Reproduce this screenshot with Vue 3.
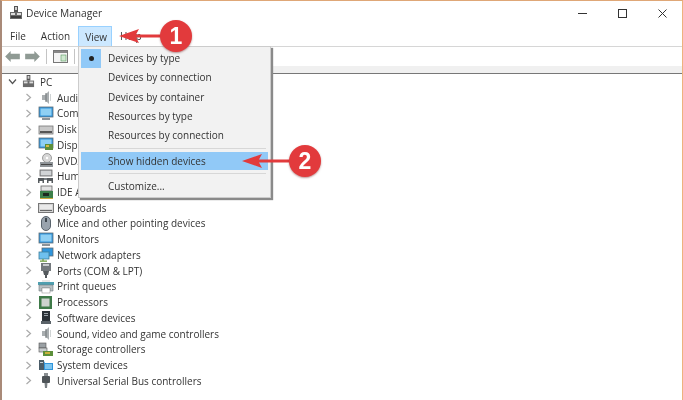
<script setup>
const menuBar = ['File', 'Action', 'View', 'Help']

const devices = [
  { label: 'Audio inputs and outputs', icon: 'speaker' },
  { label: 'Computer', icon: 'monitor' },
  { label: 'Disk drives', icon: 'disk' },
  { label: 'Display adapters', icon: 'display' },
  { label: 'DVD/CD-ROM drives', icon: 'dvd' },
  { label: 'Human Interface Devices', icon: 'hid' },
  { label: 'IDE ATA/ATAPI controllers', icon: 'ide' },
  { label: 'Keyboards', icon: 'keyboard' },
  { label: 'Mice and other pointing devices', icon: 'mouse' },
  { label: 'Monitors', icon: 'monitor' },
  { label: 'Network adapters', icon: 'network' },
  { label: 'Ports (COM & LPT)', icon: 'port' },
  { label: 'Print queues', icon: 'printer' },
  { label: 'Processors', icon: 'cpu' },
  { label: 'Software devices', icon: 'software' },
  { label: 'Sound, video and game controllers', icon: 'speaker' },
  { label: 'Storage controllers', icon: 'storage' },
  { label: 'System devices', icon: 'system' },
  { label: 'Universal Serial Bus controllers', icon: 'usb' },
]

const viewItems = [
  { label: 'Devices by type', checked: true },
  { label: 'Devices by connection' },
  { label: 'Devices by container' },
  { label: 'Resources by type' },
  { label: 'Resources by connection' },
]
</script>

<template>
  <div class="window">
    <header class="titlebar">
      <svg class="titlebar__icon" width="14" height="14" viewBox="0 0 14 14">
        <rect x="5" y="0" width="4" height="6" fill="#555" />
        <rect x="6" y="1" width="2" height="3" fill="#cfcfcf" />
        <rect x="1" y="6" width="12" height="7" fill="#6a6a6a" />
        <rect x="2" y="7" width="4" height="2" fill="#ddd" />
        <rect x="8" y="7" width="4" height="2" fill="#ddd" />
        <rect x="2" y="10" width="10" height="2" fill="#3d3d3d" />
      </svg>
      <span class="titlebar__text">Device Manager</span>
      <div class="titlebar__controls">
        <svg width="9" height="9" viewBox="0 0 9 9"><path d="M0 4.5h9" stroke="#333" /></svg>
        <svg width="9" height="9" viewBox="0 0 9 9"><rect x=".5" y=".5" width="8" height="8" fill="none" stroke="#333" /></svg>
        <svg width="9" height="9" viewBox="0 0 9 9"><path d="M.5.5l8 8M8.5.5l-8 8" stroke="#333" /></svg>
      </div>
    </header>

    <nav class="menubar">
      <span
        v-for="item in menuBar"
        :key="item"
        class="menubar__item"
        :class="{ 'menubar__item--open': item === 'View' }"
      >{{ item }}</span>
    </nav>

    <div class="toolbar">
      <svg class="toolbar__arrow" width="15" height="11" viewBox="0 0 16 12"><path d="M0 6l6-6v3h10v6H6v3z" fill="#8f9a94" /></svg>
      <svg class="toolbar__arrow" width="15" height="11" viewBox="0 0 16 12"><path d="M16 6l-6-6v3H0v6h10v3z" fill="#8f9a94" /></svg>
      <i class="toolbar__sep"></i>
      <svg width="15" height="13" viewBox="0 0 15 13">
        <rect x=".5" y=".5" width="14" height="12" fill="#f4f4f4" stroke="#777" />
        <rect x="1" y="1" width="13" height="2" fill="#888" />
        <rect x="8" y="5" width="5" height="6" fill="#cfe8d0" stroke="#5a9a62" stroke-width=".6" />
      </svg>
      <i class="toolbar__sep"></i>
    </div>
    <div class="toolbar-strip"></div>

    <section class="tree">
      <div class="tree__row tree__row--root">
        <svg class="tree__chevron" width="9" height="9" viewBox="0 0 9 9"><path d="M1 2.5l3.5 4 3.5-4" fill="none" stroke="#555" stroke-width="1.2" /></svg>
        <svg class="tree__root-icon" width="13" height="13" viewBox="0 0 14 14">
          <rect x="5" y="0" width="4" height="6" fill="#555" />
          <rect x="6" y="1" width="2" height="3" fill="#cfcfcf" />
          <rect x="1" y="6" width="12" height="7" fill="#6a6a6a" />
          <rect x="2" y="7" width="4" height="2" fill="#ddd" />
          <rect x="8" y="7" width="4" height="2" fill="#ddd" />
        </svg>
        <span>PC</span>
      </div>
      <div v-for="device in devices" :key="device.label" class="tree__row">
        <svg class="tree__chevron" width="9" height="9" viewBox="0 0 9 9"><path d="M2.5 1l4 3.5-4 3.5" fill="none" stroke="#aaa" stroke-width="1.2" /></svg>
        <svg class="tree__icon" width="16" height="15" viewBox="0 0 16 15">
          <g v-if="device.icon === 'speaker'">
            <path d="M4 5h3l4-4v13l-4-4H4z" fill="#a9aeb0" />
            <path d="M8 3v9" stroke="#6e7476" />
            <path d="M12.5 4v7" stroke="#cfd3d4" />
          </g>
          <g v-else-if="device.icon === 'monitor'">
            <rect x="1" y="1" width="14" height="10" fill="#2f95dc" stroke="#5f6d75" stroke-width=".8" />
            <rect x="2.5" y="2.5" width="11" height="7" fill="#8fd0f4" />
            <rect x="4" y="12" width="8" height="2" fill="#8d9398" />
          </g>
          <g v-else-if="device.icon === 'disk'">
            <rect x="1" y="4" width="14" height="8" fill="#c9c9c9" stroke="#777" stroke-width=".8" />
            <rect x="2" y="9" width="12" height="2" fill="#555" />
          </g>
          <g v-else-if="device.icon === 'display'">
            <rect x="1" y="1" width="14" height="10" fill="#2f95dc" stroke="#5f6d75" stroke-width=".8" />
            <rect x="2.5" y="2.5" width="11" height="7" fill="#8fd0f4" />
            <rect x="7" y="7" width="8" height="6" fill="#5c8f3a" />
            <rect x="8" y="8" width="3" height="2" fill="#d7b84a" />
          </g>
          <g v-else-if="device.icon === 'dvd'">
            <circle cx="9" cy="5" r="4.5" fill="#d7d7d7" stroke="#888" stroke-width=".8" />
            <circle cx="9" cy="5" r="1.2" fill="#fff" />
            <rect x="2" y="9" width="13" height="5" fill="#8f9498" />
            <rect x="3" y="11" width="11" height="1" fill="#444" />
          </g>
          <g v-else-if="device.icon === 'hid'">
            <rect x="2" y="1" width="12" height="6" fill="#b9bdc0" stroke="#666" stroke-width=".8" />
            <path d="M3 3h10M3 5h10" stroke="#fff" stroke-width=".7" />
            <path d="M0 14V9h6v5h-1.5v-2h-3v2zM9 14V9h6v5h-1.5v-2h-3v2z" fill="#565b5e" />
            <rect x="6" y="9" width="3" height="2" fill="#7a8084" />
          </g>
          <g v-else-if="device.icon === 'ide'">
            <rect x="3" y="1" width="11" height="5" fill="#e2e2e2" stroke="#666" stroke-width=".8" />
            <rect x="2" y="6" width="13" height="7" fill="#3c7f4a" />
            <rect x="5" y="8" width="6" height="3" fill="#1d2a20" />
            <rect x="2" y="13" width="13" height="1" fill="#c7a93c" />
          </g>
          <g v-else-if="device.icon === 'keyboard'">
            <rect x=".5" y="3.5" width="15" height="9" fill="#d4d4d4" stroke="#777" />
            <path d="M2 6h12M2 8h12" stroke="#fff" />
            <path d="M2 10.5h12" stroke="#666" />
          </g>
          <g v-else-if="device.icon === 'mouse'">
            <rect x="3.5" y="0.5" width="9" height="14" rx="4.5" fill="#99a3ad" stroke="#59636c" />
            <rect x="7" y="2" width="2" height="4" fill="#3f474e" />
          </g>
          <g v-else-if="device.icon === 'network'">
            <rect x="4" y="1" width="11" height="8" fill="#2f95dc" stroke="#5f6d75" stroke-width=".8" />
            <rect x="1" y="5" width="10" height="7" fill="#6fc0ee" stroke="#3c7f9c" stroke-width=".8" />
            <path d="M5 12v2M2 14.2h7" stroke="#6c9c3a" stroke-width="1.2" />
          </g>
          <g v-else-if="device.icon === 'port'">
            <rect x="3" y="0" width="10" height="8" fill="#73787c" />
            <rect x="5" y="1" width="6" height="2" fill="#c7cacc" />
            <path d="M5 8h6l-1 4H6z" fill="#555a5e" />
            <rect x="7" y="12" width="2" height="3" fill="#555a5e" />
          </g>
          <g v-else-if="device.icon === 'printer'">
            <rect x="0" y="3" width="16" height="3" fill="#4f9fb0" />
            <path d="M1 6h14v6H12V9H4v3H1z" fill="#b8c0c4" stroke="#70787c" stroke-width=".6" />
            <rect x="4" y="1" width="8" height="2" fill="#e8e8e8" />
            <rect x="4" y="9" width="8" height="5" fill="#fff" stroke="#999" stroke-width=".6" />
          </g>
          <g v-else-if="device.icon === 'cpu'">
            <rect x="1" y="1" width="13" height="13" fill="#3e7a48" />
            <rect x="3.5" y="3.5" width="8" height="8" fill="#cdd3ce" />
          </g>
          <g v-else-if="device.icon === 'software'">
            <path d="M4 1h8v10H4z" fill="#2c3238" />
            <rect x="6" y="3" width="4" height="1" fill="#9aa2a8" />
            <rect x="6" y="5" width="4" height="1" fill="#9aa2a8" />
            <path d="M3 11h10v3H3z" fill="#5a6268" />
          </g>
          <g v-else-if="device.icon === 'storage'">
            <rect x="1" y="1" width="7" height="5" fill="#9aa0a4" stroke="#555" stroke-width=".6" />
            <rect x="1" y="6" width="8" height="4" fill="#c8ccce" stroke="#555" stroke-width=".6" />
            <rect x="5" y="9" width="10" height="5" fill="#5c8f3a" />
            <rect x="7" y="10" width="5" height="2" fill="#c9b23c" />
          </g>
          <g v-else-if="device.icon === 'system'">
            <path d="M1 3h5l1 2h8v7H1z" fill="#2f95dc" />
            <rect x="1" y="2" width="5" height="10" fill="#4a5c68" />
            <rect x="2" y="4" width="3" height="1" fill="#c7d2d8" />
            <rect x="7" y="6" width="7" height="5" fill="#7cc5f0" />
          </g>
          <g v-else-if="device.icon === 'usb'">
            <rect x="6" y="0" width="4" height="3" fill="#8a8f92" />
            <rect x="4" y="3" width="8" height="7" rx="1" fill="#4e5458" />
            <path d="M6.5 10h3L9 15H7z" fill="#7a8084" />
          </g>
        </svg>
        <span class="tree__label">{{ device.label }}</span>
      </div>
    </section>

    <!-- dropdown sits over the tree -->
    <div class="dropdown">
      <div
        v-for="item in viewItems"
        :key="item.label"
        class="dropdown__item"
      >
        <span class="dropdown__check" :class="{ 'dropdown__check--on': item.checked }"><i v-if="item.checked"></i></span>
        <span class="dropdown__label">{{ item.label }}</span>
      </div>
      <div class="dropdown__sep"></div>
      <div class="dropdown__item dropdown__item--hover">
        <span class="dropdown__check"></span>
        <span class="dropdown__label">Show hidden devices</span>
      </div>
      <div class="dropdown__sep dropdown__sep--tight"></div>
      <div class="dropdown__item">
        <span class="dropdown__check"></span>
        <span class="dropdown__label">Customize...</span>
      </div>
    </div>

    <!-- red callouts from the article -->
    <div class="callout callout--one">
      <svg width="44" height="14" viewBox="0 0 44 14"><path d="M0 7l20-7-3 5.5h27v3H17l3 5.500z" fill="#e23a3c" /></svg>
      <span class="callout__badge">1</span>
    </div>
    <div class="callout callout--two">
      <svg width="50" height="14" viewBox="0 0 50 14"><path d="M0 7l20-7-3 5.500h33v3H17l3 5.500z" fill="#e23a3c" /></svg>
      <span class="callout__badge">2</span>
    </div>
  </div>
</template>

<style scoped>
.window {
  position: relative;
  box-sizing: border-box;
  width: 683px;
  height: 400px;
  overflow: hidden;
  border-top: 1px solid #dfa777;
  border-left: 2px solid #a98a78;
  border-right: 1px solid #eeb27e;
  background: #fff;
  color: #1e1e1e;
  font-family: "Open Sans", "Noto Sans", sans-serif;
  font-size: 10px;
  filter: blur(0.3px);
}

.titlebar {
  display: flex;
  height: 24px;
  align-items: center;
  padding-left: 7px;
}

.titlebar__icon {
  margin-right: 3px;
}

.titlebar__text {
  font-size: 10.2px;
  color: #333;
}

.titlebar__controls {
  display: flex;
  margin-left: auto;
  gap: 31px;
  padding-right: 15px;
}

.menubar {
  display: flex;
  height: 21px;
  align-items: center;
  padding-left: 1px;
  border-bottom: 1px solid #d6d6d6;
}

.menubar__item {
  display: flex;
  height: 19px;
  align-items: center;
  box-sizing: border-box;
  padding: 0 7px;
  margin-top: 1px;
  color: #333;
  margin-right: 1px;
}

.menubar__item--open {
  height: 20px;
  padding: 0 4px 0 6px;
  border: 1px solid #99d1ff;
  border-bottom: none;
  background: #cce8ff;
}

.toolbar {
  display: flex;
  height: 19px;
  align-items: center;
  gap: 5px;
  padding-left: 3px;
}

.toolbar__sep {
  display: block;
  width: 1px;
  height: 15px;
  margin: 0 1px;
  background: #c4c4c4;
}

.toolbar-strip {
  height: 7px;
  border-bottom: 1px solid #777;
  background: #f0f0f0;
}

.tree {
  display: flex;
  flex-direction: column;
}

.tree__row {
  display: flex;
  height: 15.74px;
  align-items: center;
  padding-left: 22px;
  color: #333;
  white-space: nowrap;
}

.tree__row--root {
  padding-left: 6px;
}

.tree__chevron {
  flex: none;
  margin-right: 5px;
}

.tree__icon {
  flex: none;
  margin-right: 3px;
}

.tree__root-icon {
  flex: none;
  margin-right: 5px;
}

.dropdown {
  position: absolute;
  top: 45px;
  left: 76px;
  box-sizing: border-box;
  width: 193px;
  height: 152px;
  padding: 2px;
  border: 1px solid #ccc;
  background: #f2f2f2;
  box-shadow: 2px 2px 1px #8a8a8a;
}

.dropdown__item {
  display: flex;
  height: 19.3px;
  align-items: center;
  color: #333;
}

.dropdown__item--hover {
  height: 18px;
  background: #91c9f7;
}

.dropdown__check {
  display: flex;
  flex: none;
  width: 20px;
  height: 100%;
  align-items: center;
  justify-content: center;
  margin-right: 7px;
}

.dropdown__check--on {
  background: #91c9f7;
}

.dropdown__check i {
  display: block;
  width: 5px;
  height: 5px;
  border-radius: 50%;
  background: #222;
}

.dropdown__label {
  margin-top: -1px;
}

.dropdown__sep {
  height: 1px;
  margin: 3px 2px 3px 28px;
  background: #d7d7d7;
}

.dropdown__sep--tight {
  margin-bottom: 2px;
}

.callout {
  position: absolute;
  display: flex;
  align-items: center;
}

.callout svg {
  margin-right: -3px;
}

.callout--one {
  top: 19px;
  left: 117px;
}

.callout--two {
  top: 144px;
  left: 240px;
}

.callout__badge {
  position: relative;
  display: flex;
  width: 32px;
  height: 32px;
  align-items: center;
  justify-content: center;
  border-radius: 50%;
  background: #e23a3c;
  color: #fff;
  font-family: "Liberation Sans", sans-serif;
  font-size: 23px;
  font-weight: 700;
  box-shadow: 0 1px 2px rgba(120, 40, 40, 0.5);
}
</style>
